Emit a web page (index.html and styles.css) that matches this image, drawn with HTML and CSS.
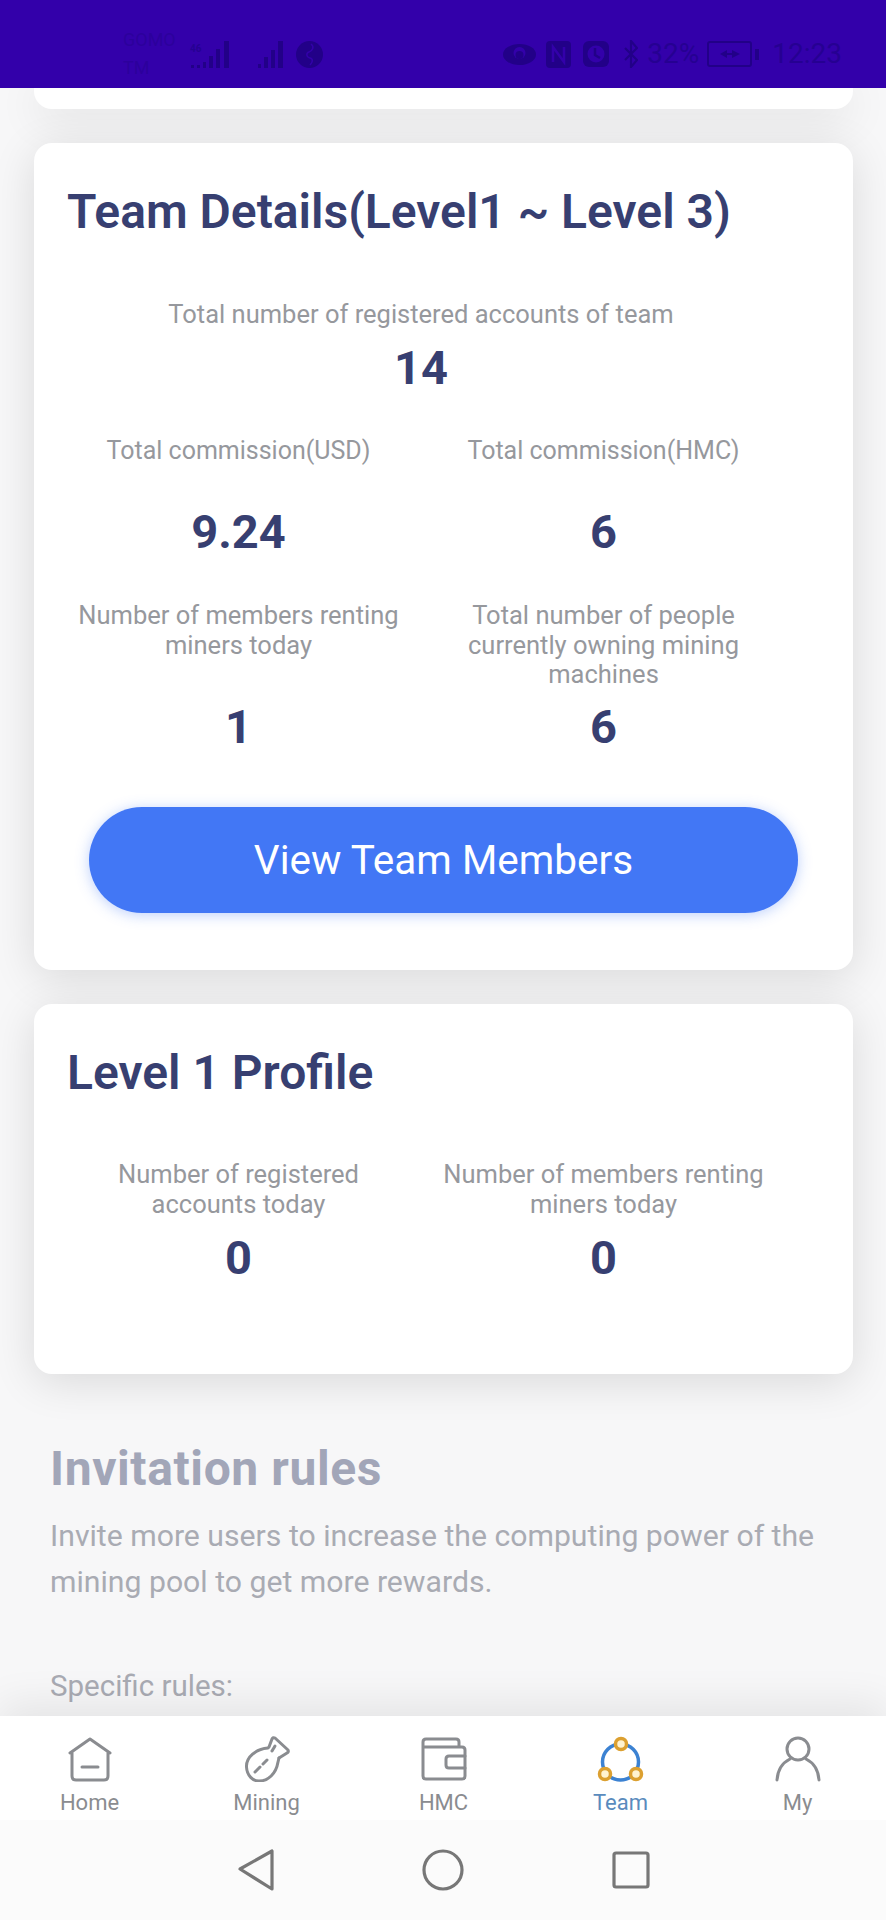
FILE: index.html
```html
<!DOCTYPE html>
<html lang="en">
<head>
    <meta charset="UTF-8">
    <meta name="viewport" content="width=device-width, initial-scale=1.0">
    <title>Team</title>
    <link rel="stylesheet" href="styles.css">
</head>
<body>
    <div class="page">
        <!-- status bar -->
        <div class="status-bar">
            <div class="status-left">
                <div class="carrier">GOMO<br>TM</div>
                <div class="net-tag">46</div>
                <svg class="signal-one" width="42" height="27" viewBox="0 0 42 27"><path d="M1 27h3v-3H1zM7 27h3v-3H7zM13 27h3v-6h-3zM19 27h4V15h-4zM26 27h4V8h-4zM34 27h5V0h-5z"/></svg>
                <svg class="signal-two" width="27" height="27" viewBox="0 0 27 27"><path d="M1 27h3v-4H1zM7 27h4V16H7zM14 27h4V9h-4zM21 27h5V0h-5z"/></svg>
                <svg class="globe" width="27" height="27" viewBox="0 0 27 27"><circle cx="13.5" cy="13.5" r="13.5"/><path d="M15 3c4 3 1 7-2 8s-3 5 1 6 2 5 0 7" stroke="#3300aa" stroke-width="1.5" fill="none"/></svg>
            </div>
            <div class="status-right">
                <svg class="eye" width="33" height="21" viewBox="0 0 33 21"><ellipse cx="16.5" cy="10.5" rx="16.5" ry="10.5"/><circle cx="16.5" cy="9" r="6" fill="#3300aa"/><circle cx="16.5" cy="11" r="4"/></svg>
                <svg class="nfc" width="25" height="27" viewBox="0 0 25 27"><rect width="25" height="27" rx="4"/><path d="M7 21V6l11 15V6" stroke="#3300aa" stroke-width="2.5" fill="none"/></svg>
                <svg class="alarm" width="26" height="26" viewBox="0 0 26 26"><rect width="26" height="26" rx="6"/><circle cx="13" cy="13" r="8.5" fill="#3300aa"/><path d="M12 7v7l5 3" stroke="#220088" stroke-width="2.5" fill="none"/></svg>
                <svg class="bt" width="14" height="28" viewBox="0 0 14 28"><path d="M1 8l12 12-6 7V1l6 7L1 20" fill="none" stroke="#220088" stroke-width="2.2"/></svg>
                <span class="batt-pct">32%</span>
                <div class="battery">
                    <svg width="20" height="10" viewBox="0 0 20 10"><path d="M0 5l7-4v3h5V1l8 4-8 4V6H7v3z"/></svg>
                </div>
                <div class="batt-tip"></div>
                <span class="clock">12:23</span>
            </div>
        </div>

        <div class="scroll-area">
            <div class="card card-stub"></div>

            <div class="card card-team">
                <h2 class="card-title">Team Details(Level1 ~ Level 3)</h2>
                <div class="stat-grid">
                    <div class="stat stat-full stat-total">
                        <p class="stat-label">Total number of registered accounts of team</p>
                        <p class="stat-value">14</p>
                    </div>
                    <div class="stat stat-commission">
                        <p class="stat-label">Total commission(USD)</p>
                        <p class="stat-value">9.24</p>
                    </div>
                    <div class="stat stat-commission">
                        <p class="stat-label">Total commission(HMC)</p>
                        <p class="stat-value">6</p>
                    </div>
                    <div class="stat stat-owners">
                        <p class="stat-label">Number of members renting miners today</p>
                        <p class="stat-value">1</p>
                    </div>
                    <div class="stat stat-owners">
                        <p class="stat-label">Total number of people currently owning mining machines</p>
                        <p class="stat-value">6</p>
                    </div>
                </div>
                <button class="view-btn">View Team Members</button>
            </div>

            <div class="card card-level">
                <h2 class="card-title">Level 1 Profile</h2>
                <div class="stat-grid">
                    <div class="stat">
                        <p class="stat-label">Number of registered accounts today</p>
                        <p class="stat-value">0</p>
                    </div>
                    <div class="stat">
                        <p class="stat-label">Number of members renting miners today</p>
                        <p class="stat-value">0</p>
                    </div>
                </div>
            </div>

            <div class="rules">
                <h2 class="rules-title">Invitation rules</h2>
                <p class="rules-text">Invite more users to increase the computing power of the mining pool to get more rewards.</p>
                <p class="rules-sub">Specific rules:</p>
            </div>
        </div>

        <!-- bottom tabs -->
        <div class="tab-bar">
            <div class="tab">
                <svg width="44" height="46" viewBox="0 0 44 46" fill="none" stroke="#8a8c90" stroke-width="3" stroke-linecap="round" stroke-linejoin="round"><path d="M2 17L22 3l20 14"/><path d="M4 17v23q0 4 4 4h28q4 0 4-4V17"/><path d="M14 31h16"/></svg>
                <span>Home</span>
            </div>
            <div class="tab">
                <svg width="46" height="46" viewBox="0 0 46 46" fill="none" stroke="#8a8c90" stroke-width="3" stroke-linecap="round" stroke-linejoin="round"><path d="M24 12C12 13 2 21 2.500 31 3 40 9 45 15 45c9 0 17-7 19-19l1-4"/><path d="M25 11l3-8q1-2 3-1l13 12q1 2-1 3l-8 5"/><path d="M31 10l-3 5"/><path d="M11 36l5-5M19 28l4-4"/></svg>
                <span>Mining</span>
            </div>
            <div class="tab">
                <svg width="46" height="46" viewBox="0 0 46 46" fill="none" stroke="#8a8c90" stroke-width="3" stroke-linecap="round" stroke-linejoin="round"><path d="M38 10V6q0-3-3-3H5Q2 3 2 6v34q0 3 3 3h36q3 0 3-3V14q0-3-3-3H2"/><path d="M44 20H28q-3 0-3 3v6q0 3 3 3h16"/></svg>
                <span>HMC</span>
            </div>
            <div class="tab tab-active">
                <svg width="48" height="46" viewBox="0 0 48 46" fill="none"><circle cx="23.500" cy="26" r="18" stroke="#3c82d2" stroke-width="3.500"/><circle cx="24" cy="8" r="5.500" fill="#fff3d0" stroke="#dca030" stroke-width="3.500"/><circle cx="8" cy="38" r="5.500" fill="#fff3d0" stroke="#dca030" stroke-width="3.500"/><circle cx="39" cy="38" r="5.500" fill="#fff3d0" stroke="#dca030" stroke-width="3.500"/></svg>
                <span>Team</span>
            </div>
            <div class="tab">
                <svg width="46" height="46" viewBox="0 0 46 46" fill="none" stroke="#8a8c90" stroke-width="3" stroke-linecap="round"><circle cx="23" cy="13" r="11"/><path d="M2 44Q3 29 15 23M44 44Q43 29 31 23"/></svg>
                <span>My</span>
            </div>
        </div>

        <!-- android nav -->
        <div class="sys-nav">
            <svg width="36" height="42" viewBox="0 0 36 42" fill="none" stroke="#777" stroke-width="3.200" stroke-linejoin="round"><path d="M2 20L34 2v38z"/></svg>
            <svg width="42" height="42" viewBox="0 0 42 42" fill="none" stroke="#777" stroke-width="3.200"><circle cx="21" cy="21" r="19"/></svg>
            <svg width="38" height="38" viewBox="0 0 38 38" fill="none" stroke="#777" stroke-width="3.200" stroke-linejoin="round"><rect x="2" y="2" width="34" height="34" rx="2"/></svg>
        </div>
    </div>
</body>
</html>
```

FILE: styles.css
```css
* {
    box-sizing: border-box;
}
body {
    margin: 0;
    padding: 0;
    font-family: Roboto, "Noto Sans", sans-serif;
    background-color: #f7f7f8;
}
p, h2 {
    margin: 0;
}
.page {
    display: flex;
    flex-direction: column;
    width: 886px;
    height: 1920px;
    overflow: hidden;
}

/* status bar */
.status-bar {
    flex: none;
    height: 88px;
    background-color: #3300aa;
    color: #260092;
    fill: #220088;
    display: flex;
    justify-content: space-between;
    align-items: center;
    padding: 20px 44px 0 123px;
    position: relative;
    z-index: 2;
}
.status-left, .status-right {
    display: flex;
    align-items: center;
}
.carrier {
    width: 67px;
    font-size: 18px;
    line-height: 28px;
    color: #2c009c;
}
.net-tag {
    width: 0;
    font-size: 10px;
    font-weight: 700;
    margin: -12px 0 0 0;
}
.signal-two {
    margin-left: 25px;
}
.globe {
    margin-left: 12px;
}
.nfc {
    margin-left: 10px;
}
.alarm {
    margin-left: 12px;
}
.bt {
    margin-left: 15px;
}
.batt-pct {
    margin-left: 9px;
    font-size: 28px;
    line-height: 32px;
}
.battery {
    width: 45px;
    height: 26px;
    margin-left: 8px;
    border: 2px solid #220088;
    border-radius: 3px;
    display: flex;
    align-items: center;
    justify-content: center;
}
.batt-tip {
    width: 4px;
    height: 11px;
    margin: 0 13px 0 3px;
    background-color: #220088;
}
.clock {
    font-size: 28px;
    line-height: 32px;
}

/* cards */
.scroll-area {
    flex: 1;
    min-height: 0;
    overflow: hidden;
    padding: 0 33px 0 34px;
}
.card {
    background-color: #fff;
    border-radius: 18px;
    box-shadow: 0 8px 44px rgba(0, 0, 0, 0.12);
}
.card-stub {
    height: 21px;
    border-radius: 0 0 18px 18px;
    margin-bottom: 34px;
}
.card-team {
    height: 827px;
    padding: 40px 33px 0;
    margin-bottom: 34px;
}
.card-level {
    height: 370px;
    padding: 40px 33px 0;
}
.card-title {
    font-size: 48px;
    line-height: 58px;
    font-weight: 600;
    color: #373f71;
}

.stat-grid {
    display: grid;
    grid-template-columns: 365px 365px;
    margin-left: -11px;
}
.stat {
    display: flex;
    flex-direction: column;
    align-items: center;
    text-align: center;
}
.stat-full {
    grid-column: 1 / 3;
}
.stat-label {
    width: 330px;
    font-size: 25.500px;
    line-height: 29.500px;
    color: #96989d;
}
.stat-full .stat-label {
    width: auto;
}
.stat-value {
    font-size: 47px;
    line-height: 56px;
    font-weight: 700;
    color: #373f71;
}
.card-team .stat-grid {
    margin-top: 59px;
}
.stat-total .stat-value {
    margin-top: 10px;
}
.stat-commission {
    margin-top: 40px;
}
.stat-commission .stat-label {
    font-size: 25px;
}
.stat-commission .stat-value {
    margin-top: 39px;
}
.stat-owners {
    margin-top: 41px;
}
.stat-owners .stat-value {
    margin-top: auto;
    padding-top: 9px;
}
.card-level .stat-grid {
    margin-top: 58px;
}
.card-level .stat-value {
    margin-top: 11px;
}

.view-btn {
    display: block;
    width: 709px;
    height: 106px;
    margin: 52px 0 0 22px;
    border: none;
    border-radius: 53px;
    background-color: #4277f5;
    color: #fff;
    font-family: inherit;
    font-size: 40.500px;
    box-shadow: 0 2px 14px rgba(66, 119, 245, 0.35);
}

/* rules, faded */
.rules {
    padding: 0 16px;
    margin-top: 67px;
}
.rules-title {
    font-size: 48px;
    line-height: 56px;
    font-weight: 700;
    letter-spacing: 0.600px;
    color: #a2a6b8;
}
.rules-text {
    margin-top: 16px;
    font-size: 30.200px;
    line-height: 46px;
    color: #a9abb3;
}
.rules-sub {
    margin-top: 58px;
    font-size: 29.500px;
    line-height: 46px;
    color: #a9abb3;
}

/* tabs */
.tab-bar {
    flex: none;
    height: 104px;
    padding-left: 1px;
    background-color: #fff;
    display: grid;
    grid-template-columns: repeat(5, 1fr);
    position: relative;
    box-shadow: 0 -12px 40px rgba(0, 0, 0, 0.08);
}
.tab {
    display: flex;
    flex-direction: column;
    align-items: center;
    padding-top: 20px;
    font-size: 22px;
    line-height: 26px;
    color: #8a8c90;
}
.tab span {
    margin-top: 8px;
}
.tab-active {
    color: #5a8bbd;
}

.sys-nav {
    flex: none;
    height: 100px;
    padding-left: 2px;
    background-color: #fbfbfb;
    position: relative;
    display: flex;
    justify-content: center;
    align-items: center;
    gap: 148px;
}
```
